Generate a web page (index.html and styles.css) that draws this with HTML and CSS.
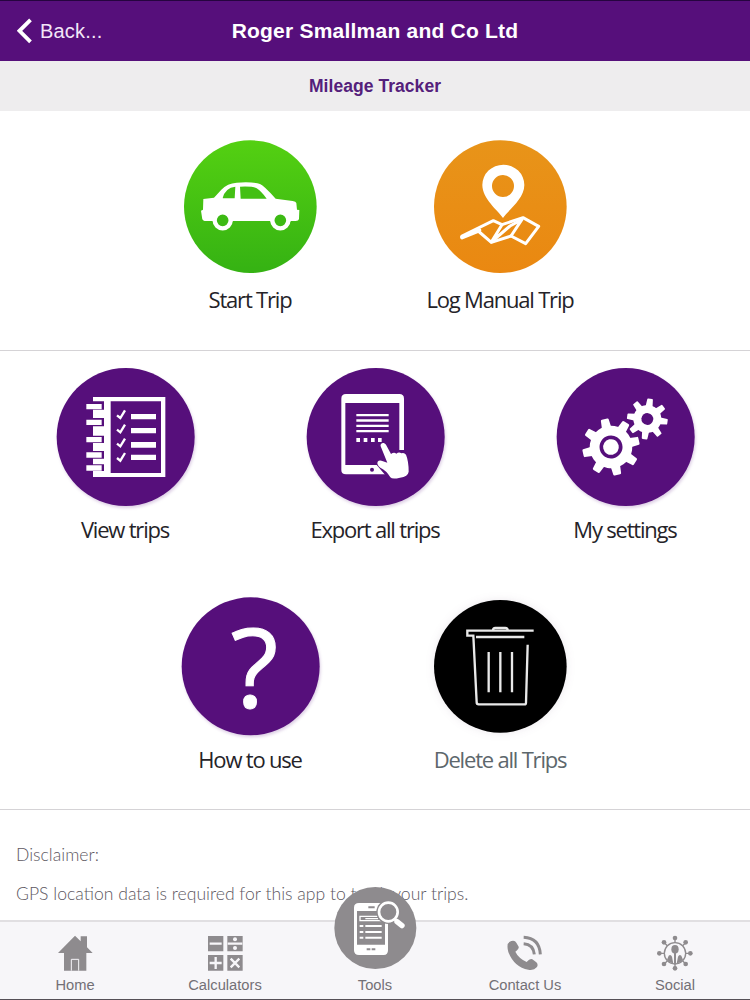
FILE: index.html
```html
<!DOCTYPE html>
<html lang="en">
<head>
    <meta charset="UTF-8">
    <title>Mileage Tracker</title>
    <link rel="stylesheet" href="styles.css">
</head>
<body>
<div class="app">
    <header class="header">
        <a class="back">
            <svg width="15" height="26" viewBox="0 0 15 26"><path d="M13.5 1.8 L2.5 12.8 L13.5 23.8" fill="none" stroke="#fff" stroke-width="3.8"/></svg>
            <span>Back...</span>
        </a>
        <h1>Roger Smallman and Co Ltd</h1>
    </header>
    <h2 class="subtitle">Mileage Tracker</h2>

    <main class="content">
        <!-- start / log trip -->
        <section class="row row-top">
            <div class="tile">
                <svg class="tile-icon" viewBox="0 0 480 450">
                    <defs>
                        <linearGradient id="green" x1="0" y1="0" x2="0" y2="1">
                            <stop offset="0" stop-color="#54d012"/>
                            <stop offset="1" stop-color="#35b213"/>
                        </linearGradient>
                    </defs>
                    <circle cx="241" cy="230" r="199" fill="url(#green)"/>
                    <path fill="#fff" d="M100 207 L132 203 L154 179 Q172 160 200 158 Q250 155 270 162 Q282 167 317 206 L368 213 Q378 215 379 219 L381 239 L388 240 L387 267 Q386 273 377 273 L362 273 A31 31 0 0 1 301 273 L188 273 A31 31 0 0 1 128 273 L104 273 Q96 271 96 262 L93 242 L99 239 Z"/>
                    <path fill="#43c014" d="M158 204 Q166 173 196 170 L194 205 L159 205 Z M210 170 Q247 168 260 175 Q274 184 290 206 L212 206 Z"/>
                    <circle cx="158" cy="271" r="24" fill="#3cba13" stroke="#fff" stroke-width="13"/>
                    <circle cx="331" cy="271" r="24" fill="#3cba13" stroke="#fff" stroke-width="13"/>
                </svg>
                <span class="label">Start Trip</span>
            </div>
            <div class="tile">
                <svg class="tile-icon" viewBox="0 0 480 450">
                    <defs>
                        <linearGradient id="orange" x1="0" y1="0" x2="0" y2="1">
                            <stop offset="0" stop-color="#e89419"/>
                            <stop offset="1" stop-color="#ea8811"/>
                        </linearGradient>
                    </defs>
                    <circle cx="241" cy="230" r="199" fill="url(#orange)"/>
                    <path fill="#fff" fill-rule="evenodd" d="M249 264 C234 241 187 207 187 165 A63 61 0 0 1 313 165 C313 207 264 241 249 264 Z M249 135 A33 33 0 1 0 249 201 A33 33 0 1 0 249 135 Z"/>
                    <g fill="none" stroke="#fff" stroke-width="9" stroke-linejoin="round" stroke-linecap="round">
                        <path stroke-width="12" d="M126 322 L178 301"/>
                        <path d="M126 318 L220 272 L246 284 L309 263 L356 289 L317 341 L273 318 L214 337 L178 306"/>
                        <path d="M246 284 L214 336 L270 288 L306 268 L273 318"/>
                    </g>
                </svg>
                <span class="label">Log Manual Trip</span>
            </div>
        </section>

        <!-- trips and settings -->
        <section class="row row-middle">
            <div class="tile">
                <svg class="tile-icon purple" viewBox="0 0 480 450">
                    <circle cx="242" cy="231" r="207" fill="#560f7b"/>
                    <path fill="#fff" fill-rule="evenodd" d="M144 111 H361 V351 H144 V333 H177 V313 H144 V296 H177 V273 H144 V249 H177 V227 H144 V199 H177 V174 H144 V149 H177 V124 H144 Z M197 124 V339 H348 V124 Z"/>
                    <path fill="#fff" d="M124 132 H170 V148 H124 Z M124 179 H170 V195 H124 Z M124 231 H170 V247 H124 Z M124 277 H170 V293 H124 Z M124 316 H170 V332 H124 Z"/>
                    <path fill="#fff" d="M258 162 H333 V178 H258 Z M258 204 H333 V220 H258 Z M258 246 H333 V263 H258 Z M258 284 H333 V300 H258 Z"/>
                    <g fill="none" stroke="#fff" stroke-width="7">
                        <path d="M216 166 L226 174 L240 151"/>
                        <path d="M216 209 L226 217 L240 194"/>
                        <path d="M216 251 L226 259 L240 236"/>
                        <path d="M216 294 L226 302 L240 279"/>
                    </g>
                </svg>
                <span class="label">View trips</span>
            </div>
            <div class="tile">
                <svg class="tile-icon purple" viewBox="0 0 480 450">
                    <circle cx="242" cy="231" r="207" fill="#560f7b"/>
                    <path fill="#fff" fill-rule="evenodd" d="M153 102 H313 Q327 102 327 116 V330 Q327 343 313 343 H153 Q139 343 139 330 V116 Q139 102 153 102 Z M151 129 V315 H313 V129 Z"/>
                    <circle cx="231" cy="329" r="6" fill="#560f7b"/>
                    <path fill="#fff" d="M184 162 H281 V169 H184 Z M184 178 H281 V185 H184 Z M184 194 H281 V201 H184 Z M184 210 H281 V217 H184 Z"/>
                    <path fill="#fff" d="M184 234 H195 V246 H184 Z M206 234 H217 V246 H206 Z M228 234 H239 V246 H228 Z M249 234 H260 V246 H249 Z"/>
                    <path fill="#560f7b" d="M304 270 H332 V350 H275 L237 305 L290 290 Z"/>
                    <path fill="#fff" d="M257 259 C254 249 267 245 273 254 L288 282 Q297 275 304 281 Q312 274 319 280 Q327 276 333 284 Q341 303 341 335 Q339 350 315 353 Q292 359 286 352 Q275 332 256 323 Q244 313 248 305 Q253 299 264 304 L277 308 Z"/>
                </svg>
                <span class="label">Export all trips</span>
            </div>
            <div class="tile">
                <svg class="tile-icon purple" viewBox="0 0 480 450">
                    <defs>
                        <path id="tooth" d="M-15 -50 L-12 -83 Q-12 -86 -8 -86 H8 Q12 -86 12 -83 L15 -50 Z"/>
                        <g id="teeth">
                            <use href="#tooth"/>
                            <use href="#tooth" transform="rotate(45)"/>
                            <use href="#tooth" transform="rotate(90)"/>
                            <use href="#tooth" transform="rotate(135)"/>
                            <use href="#tooth" transform="rotate(180)"/>
                            <use href="#tooth" transform="rotate(225)"/>
                            <use href="#tooth" transform="rotate(270)"/>
                            <use href="#tooth" transform="rotate(315)"/>
                        </g>
                    </defs>
                    <circle cx="242" cy="231" r="207" fill="#560f7b"/>
                    <g fill="#fff" transform="translate(307 177) rotate(8) scale(.71)">
                        <use href="#teeth"/>
                        <circle r="59"/>
                        <circle r="25" fill="#560f7b"/>
                    </g>
                    <g fill="#fff" transform="translate(198 261) rotate(-13)">
                        <use href="#teeth"/>
                        <circle r="64"/>
                        <circle r="29" fill="none" stroke="#560f7b" stroke-width="11"/>
                    </g>
                </svg>
                <span class="label">My settings</span>
            </div>
        </section>

        <!-- help / delete -->
        <section class="row row-bottom">
            <div class="tile">
                <svg class="tile-icon purple" viewBox="0 0 480 450">
                    <circle cx="242" cy="229" r="207" fill="#560f7b"/>
                    <text class="question" x="253" y="354" text-anchor="middle">?</text>
                </svg>
                <span class="label">How to use</span>
            </div>
            <div class="tile">
                <svg class="tile-icon delete" viewBox="0 0 480 450">
                    <circle cx="241" cy="229" r="199" fill="#000"/>
                    <g fill="none" stroke="#e9e9e9" stroke-width="7">
                        <path d="M341 122 H142 V137 H160 L170 337 Q170 343 176 343 H313 Q318 343 318 338 L323 164"/>
                        <path d="M219 121 Q219 114 226 114 H256 Q263 114 263 121"/>
                        <path d="M168 141 H313 M206 186 V307 M241 186 V307 M276 186 V307"/>
                    </g>
                </svg>
                <span class="label label-muted">Delete all Trips</span>
            </div>
        </section>

        <div class="disclaimer">
            <p>Disclaimer:</p>
            <p>GPS location data is required for this app to track your trips.</p>
        </div>
    </main>

    <nav class="tabs">
        <a class="tab">
            <svg class="tab-icon" viewBox="150 270 150 150">
                <path d="M225 287 L242 304 V289 H261 V322 L278 339 H259 V392 H192 V339 H174 Z"/>
                <path d="M214 392 V358 H236 V392" fill="none" stroke="#f7f6f9" stroke-width="3"/>
            </svg>
            <span>Home</span>
        </a>
        <a class="tab">
            <svg class="tab-icon" viewBox="600 270 150 150">
                <path d="M624 288 H670 V334 H624 Z M682 288 H728 V334 H682 Z M624 345 H670 V392 H624 Z M682 345 H728 V392 H682 Z"/>
                <path d="M629 311 H665 M683 311 H727 M629 369 H665 M647 351 V387 M692 356 L718 382 M718 356 L692 382" fill="none" stroke="#f7f6f9" stroke-width="7"/>
                <circle cx="705" cy="298" r="6" fill="#f7f6f9"/>
                <circle cx="705" cy="324" r="6" fill="#f7f6f9"/>
            </svg>
            <span>Calculators</span>
        </a>
        <a class="tab">
            <svg class="tools-icon" viewBox="129 139 252 252">
                <circle cx="256" cy="265" r="123" fill="#8e8b8e"/>
                <path fill="#fff" fill-rule="evenodd" d="M207 190 H281 Q294 190 294 204 V332 Q294 346 281 346 H207 Q192 346 192 332 V204 Q192 190 207 190 Z M201 214 V315 H285 V214 Z"/>
                <path fill="none" stroke="#8e8b8e" stroke-width="6" d="M235 203 H254 M230 329 H241 M245 329 H256"/>
                <path fill="none" stroke="#fff" stroke-width="4" d="M266 230 H210 V243 H274 M226 237 H264"/>
                <path fill="none" stroke="#fff" stroke-width="6" d="M209 259 H220 M226 259 H275 M209 277 H220 M226 277 H275 M209 294 H220 M226 294 H275"/>
                <circle cx="295" cy="217" r="36" fill="#8e8b8e"/>
                <path d="M312 237 L336 259" stroke="#8e8b8e" stroke-width="24"/>
                <circle cx="295" cy="217" r="28" fill="#8e8b8e" stroke="#fff" stroke-width="8"/>
                <path d="M314 239 L321 245" stroke="#fff" stroke-width="8"/>
                <path d="M321 246 L336 258" stroke="#fff" stroke-width="16" stroke-linecap="round"/>
            </svg>
            <span>Tools</span>
        </a>
        <a class="tab">
            <svg class="tab-icon" viewBox="90 270 150 150">
                <path d="M124 303 Q135 300 139 308 L146 320 Q148 326 136 335 Q145 354 170 366 Q180 354 187 358 L199 367 Q206 374 200 382 Q192 392 175 389 Q133 382 115 336 Q107 308 124 303 Z"/>
                <path d="M161 292 Q208 294 211 343 M161 311 Q190 313 193 343" fill="none" stroke="#8e8b8e" stroke-width="9"/>
            </svg>
            <span>Contact Us</span>
        </a>
        <a class="tab">
            <svg class="tab-icon" viewBox="540 270 150 150">
                <g stroke="#8e8b8e" stroke-width="4" fill="none">
                    <circle cx="615" cy="340" r="32"/>
                    <path d="M615 308 V294 M615 372 V386 M583 340 H568 M647 340 H662 M592 317 L581 306 M638 317 L648 307 M592 363 L582 372 M638 363 L648 372"/>
                </g>
                <circle cx="615" cy="294" r="7"/>
                <circle cx="615" cy="385" r="7"/>
                <circle cx="568" cy="340" r="7"/>
                <circle cx="661" cy="340" r="7"/>
                <circle cx="582" cy="307" r="7"/>
                <circle cx="647" cy="307" r="7"/>
                <circle cx="582" cy="372" r="7"/>
                <circle cx="647" cy="372" r="7"/>
                <ellipse cx="615" cy="328" rx="11" ry="13"/>
                <path d="M612 338 H618 V372 H612 Z M596 347 Q602 342 606 350 L610 371 Q599 369 591 359 Z M634 347 Q628 342 624 350 L620 371 Q631 369 639 359 Z"/>
            </svg>
            <span>Social</span>
        </a>
    </nav>
</div>
</body>
</html>
```
FILE: styles.css
```css
html, body, h1, h2, p {
    margin: 0;
    padding: 0;
}

body {
    background: #fff;
    font-family: "Liberation Sans", Arial, sans-serif;
}

.app {
    width: 750px;
    height: 1000px;
    box-sizing: border-box;
    display: flex;
    flex-direction: column;
    overflow: hidden;
    border-bottom: 1px solid #555057;
}

.header {
    height: 61px;
    box-sizing: border-box;
    flex: none;
    display: grid;
    grid-template-columns: 150px 1fr 150px;
    align-items: center;
    background: #560f7b;
    border-top: 1px solid #25043f;
    color: #fff;
}

.back {
    display: flex;
    align-items: center;
    gap: 8px;
    padding-left: 17px;
    font-size: 20px;
    letter-spacing: 0.2px;
    color: #f3e6f8;
}

.header h1 {
    text-align: center;
    font-size: 21px;
    letter-spacing: 0.22px;
    white-space: nowrap;
}

.subtitle {
    height: 50px;
    flex: none;
    line-height: 51px;
    text-align: center;
    font-size: 17.5px;
    letter-spacing: 0.05px;
    color: #54207b;
    background: #eeedee;
}

.content {
    flex: 1;
    min-height: 0;
}

.row {
    display: flex;
    justify-content: center;
    box-sizing: border-box;
}

.row-top {
    height: 240px;
    padding-top: 19px;
    border-bottom: 1px solid #d5d3d6;
}

.row-middle {
    height: 230px;
    padding-top: 9px;
}

.row-bottom {
    height: 229px;
    padding-top: 9px;
    border-bottom: 1px solid #d5d3d6;
}

.tile {
    width: 250px;
    display: flex;
    flex-direction: column;
    align-items: center;
}

.tile-icon {
    width: 160px;
    height: 150px;
}

.purple {
    filter: drop-shadow(1px 2px 1.5px rgba(86, 15, 123, 0.2));
}

.delete {
    filter: drop-shadow(0 0 4px rgba(80, 40, 90, 0.1));
}

.label {
    line-height: 38px;
    font-family: "Open Sans", "Noto Sans", sans-serif;
    font-size: 22px;
    letter-spacing: -1.2px;
    color: #252328;
}

.label-muted {
    color: #5d676c;
}

.question {
    font-family: "Open Sans", "Noto Sans", sans-serif;
    font-size: 332px;
    fill: #fff;
    stroke: #fff;
    stroke-width: 3px;
}

.disclaimer {
    padding: 25px 16px 0;
    font-family: Lato, sans-serif;
    font-weight: 300;
    font-size: 17.6px;
    line-height: 39px;
    color: #5d585f;
}

.tabs {
    height: 79px;
    flex: none;
    box-sizing: border-box;
    display: flex;
    position: relative;
    background: #f7f6f9;
    border-top: 2px solid #e1dfe2;
}

.tab {
    width: 150px;
    display: flex;
    flex-direction: column;
    align-items: center;
    justify-content: flex-end;
    position: relative;
    font-size: 14.7px;
    line-height: 20px;
    padding-bottom: 4px;
    box-sizing: border-box;
    color: #737076;
}

.tab-icon {
    width: 50px;
    height: 50px;
    margin-bottom: -5px;
    fill: #8e8b8e;
}

/* raised button, sticks out over the disclaimer */
.tools-icon {
    position: absolute;
    top: -36px;
    left: 33px;
    width: 84px;
    height: 84px;
}
```
